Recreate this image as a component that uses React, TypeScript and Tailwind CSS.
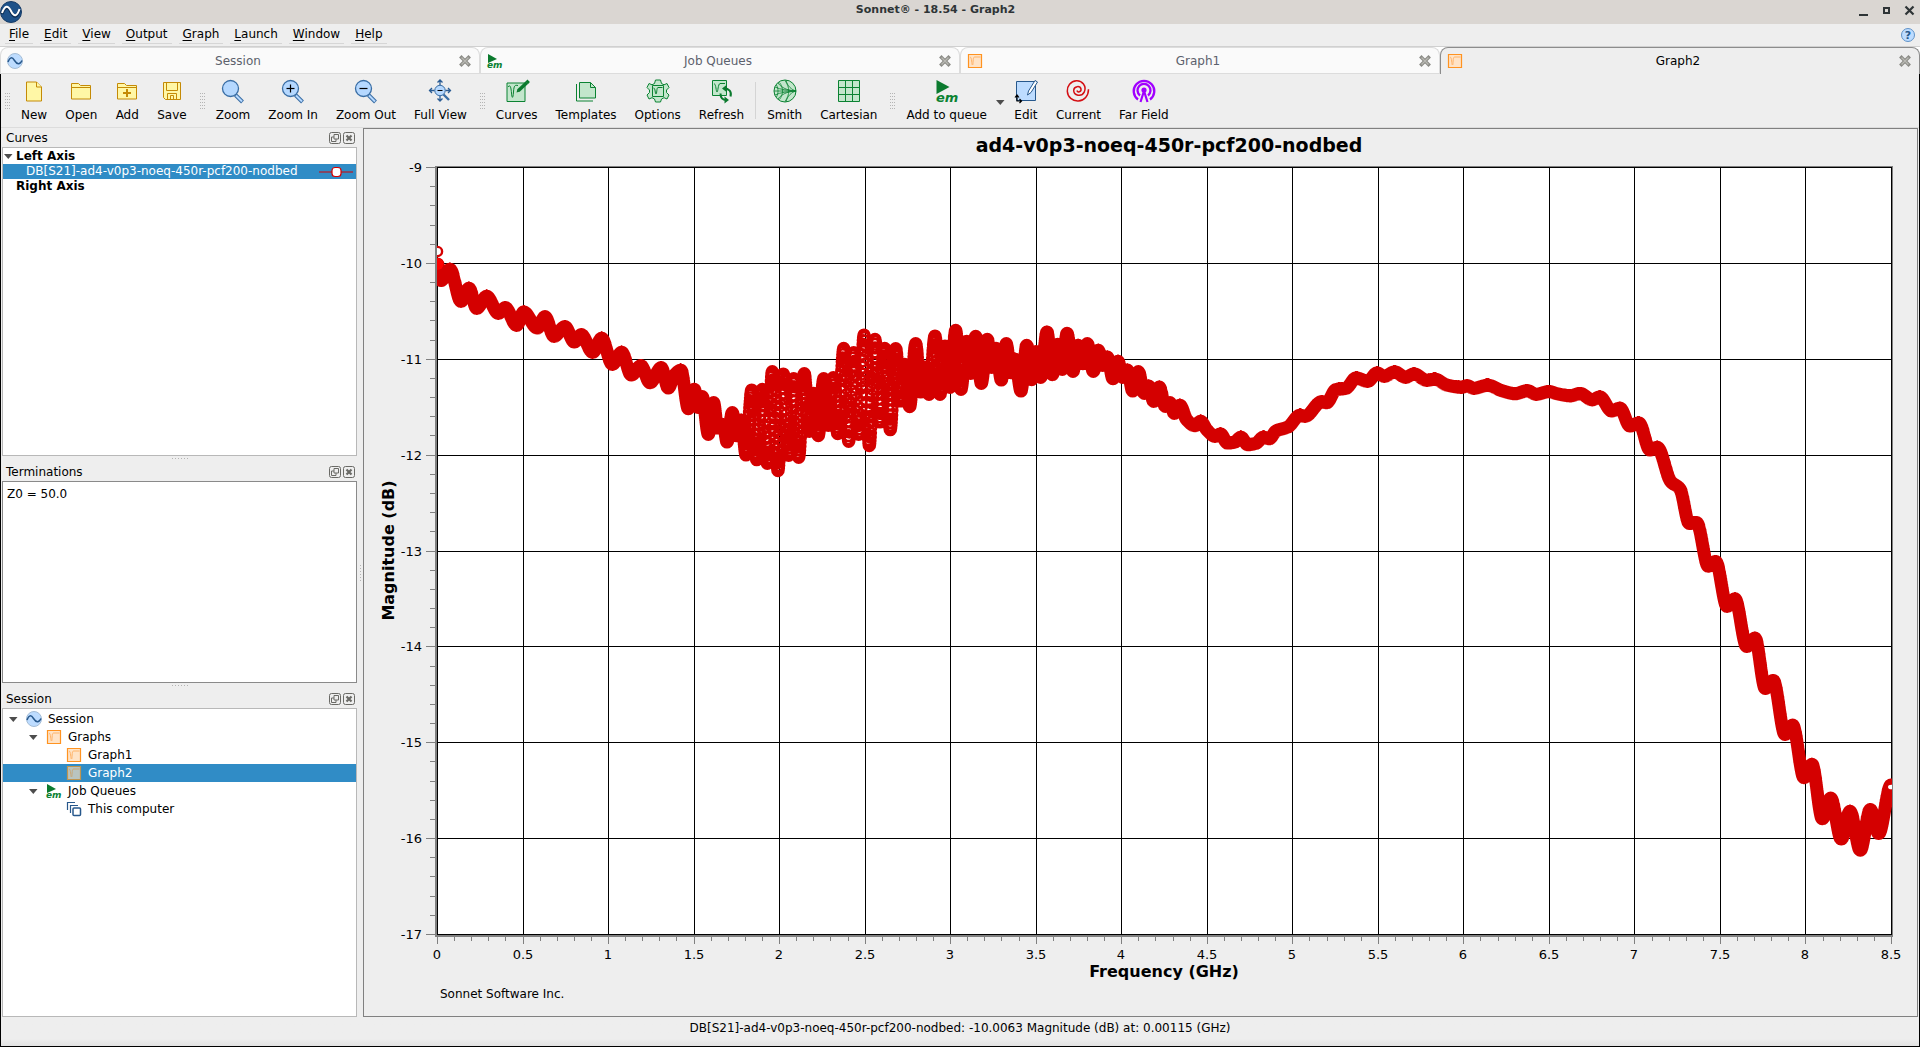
import { useState } from 'react';
import type { ReactNode } from 'react';

/* ---------- Icons ---------- */

const YELLOW = { fill: '#fff7a6', stroke: '#c48a06' };
const GREEN = { fill: '#c3e6cc', stroke: '#0b8232' };
const BLUE = { fill: '#b5d8ff', stroke: '#3a6ea5' };

function Svg({ children, size = 24 }: { children: ReactNode; size?: number }) {
  return (
    <svg width={size} height={size} viewBox={`0 0 ${size} ${size}`} fill="none" className="shrink-0 overflow-visible">
      {children}
    </svg>
  );
}

const NewIcon = () => (
  <Svg>
    <path d="M4.5 3h10l5 5v14h-15z" {...YELLOW} />
    <path d="M14.5 3v5h5" {...YELLOW} />
  </Svg>
);

const OpenIcon = () => (
  <Svg>
    <path d="M2.5 20V4.5h7l2 2h10V20z" {...YELLOW} />
    <path d="M2.5 8.5h19" {...YELLOW} />
  </Svg>
);

const AddIcon = () => (
  <Svg>
    <path d="M2.5 20V4.5h7l2 2h10V20z" {...YELLOW} />
    <path d="M2.5 8.5h19" {...YELLOW} />
    <path d="M12 10v8M8 14h8" stroke="#c48a06" strokeWidth="2" />
  </Svg>
);

const SaveIcon = () => (
  <Svg>
    <path d="M3.5 3.5h17v17h-15l-2-2z" {...YELLOW} />
    <path d="M6.5 3.5v8h11v-8M7.5 20.5v-6h9v6M10.5 20.5v-4h3v4" stroke="#c48a06" />
  </Svg>
);

function Lens({ sign }: { sign?: 'plus' | 'minus' }) {
  return (
    <Svg>
      <path d="M14.5 16l7 7" stroke="#3a6ea5" strokeWidth="4" />
      <path d="M15 16.5l6 6" stroke="#b5d8ff" strokeWidth="2" />
      <circle cx="9.5" cy="9.5" r="8" {...BLUE} strokeWidth="1.3" />
      {sign && <path d="M5.5 9.5h8" stroke="#000" strokeWidth="1.2" />}
      {sign === 'plus' && <path d="M9.5 5.5v8" stroke="#000" strokeWidth="1.2" />}
    </Svg>
  );
}

const FullViewIcon = () => (
  <Svg>
    <path d="M15 15l6 6" stroke="#3a6ea5" strokeWidth="2.4" />
    <circle cx="12" cy="11.5" r="5.2" {...BLUE} />
    <path d="M9.5 11.5h5" stroke="#000" />
    <path
      d="M12 6V1M9.5 3.5L12 1l2.5 2.5M12 17v5M9.5 19.5L12 22l2.5-2.5M6.5 11.5h-5M4 9l-2.5 2.5L4 14M17.5 11.5h5M20 9l2.5 2.5L20 14"
      stroke="#2a5c94"
      strokeWidth="1.3"
    />
  </Svg>
);

const CurvesIcon = () => (
  <Svg>
    <path d="M2 4h18v18.5H2z" {...GREEN} />
    <path d="M3 8c2-3 3 0 3.5 6 .5 6 1.5 6 2-1C9 6 10 6 13 6.5" stroke="#0b8232" />
    <path d="M13.5 11.5L22 3.5" stroke="#0b7a2e" strokeWidth="3.6" />
    <path d="M21.5 1.5l2.5 2.5" stroke="#0b7a2e" strokeWidth="2.5" />
    <path d="M11.5 13.5l1-3.5 2.5 2.5z" fill="#0b7a2e" />
  </Svg>
);

const TemplatesIcon = () => (
  <Svg>
    <path d="M5.5 3.5h11l5 5v10.5h-16z" {...GREEN} />
    <path d="M16.5 3.5v5h5M2.5 5v17h16.5" stroke="#0b8232" />
  </Svg>
);

const OptionsIcon = () => (
  <Svg>
    <path
      d="M9.5 1h5l1 3.5 2.5 1.3 3-1.3 2 4-2.500 2.500v2.500l2.500 2.500-2 4-3-1.300-2.500 1.300-1 3h-5l-1-3L6 18.700 3 20l-2-4 2.500-2.500V11L1 8.500l2-4 3 1.300L8.500 4.500z"
      {...GREEN}
      strokeLinejoin="round"
    />
    <path d="M6.5 6.5h11v11h-11z" {...GREEN} />
    <path d="M7.5 9c2 0 1.5 6 2.5 6s.5-6.5 2-6.5h4.5" stroke="#0b8232" />
  </Svg>
);

const RefreshIcon = () => (
  <Svg>
    <path d="M2.5 1.5h14v15h-14z" {...GREEN} />
    <path d="M4 5c2-1 2 8 3 8s1-8 3-8.5h5" stroke="#0b8232" />
    <path d="M14 9.5c5 0 8 3 6.5 8M10.5 14.5c0 4 2 6.5 6 6.5" stroke="#0b7a2e" strokeWidth="2" />
    <path d="M12 9.5l4.5-3.5v7zM19 21l-4.5-3.5v7z" fill="#0b7a2e" />
  </Svg>
);

const SmithIcon = () => (
  <Svg>
    <circle cx="12" cy="12" r="11" {...GREEN} />
    <path
      d="M1 12h22M23 12C18 12 9 10 5 4M23 12C18 12 9 14 5 20M23 12C19 11 14 7 13 1M23 12c-4 1-9 5-10 11M23 12c-8-1-15-1-21-4M23 12c-8 1-15 1-21 4M6.5 3.5c4 5 4 12 0 17M12 1.5c5 7 5 14 0 21M3.5 6c2 4 2 8 0 12"
      stroke="#0b8232"
      strokeWidth=".8"
    />
  </Svg>
);

const CartesianIcon = () => (
  <Svg>
    <path d="M1.5 1.5h21v21h-21z" {...GREEN} />
    <path d="M8.5 1.5v21M15.5 1.5v21M1.5 8.5h21M1.5 15.5h21" stroke="#0b8232" />
  </Svg>
);

const EmIcon = () => (
  <Svg>
    <path d="M1.5 1l13 7-13 7z" fill="#0b7a2e" />
    <text x="1" y="23" fontFamily="DejaVu Sans" fontSize="13" fontStyle="italic" fontWeight="bold" fill="#0b8232">em</text>
  </Svg>
);

const SmallEmIcon = () => (
  <Svg size={16}>
    <path d="M1 1l9 5-9 4z" fill="#0b7a2e" />
    <text x="0" y="15" fontFamily="DejaVu Sans" fontSize="9" fontStyle="italic" fontWeight="bold" fill="#0b8232">em</text>
  </Svg>
);

const EditIcon = () => (
  <Svg>
    <path d="M2.5 2.5h19v19h-19z" fill="#bddcff" stroke="#27588c" />
    <path d="M13.5 16l1-4L21 1.5l2.5 1.5-6.5 10.5z" fill="#fff" stroke="#27588c" />
    <path d="M3 17v5h4M1 18.5L3 16l2 2.5M5.5 20l2 2-2 2" stroke="#000" strokeWidth="1.2" />
  </Svg>
);

const CurrentIcon = () => (
  <Svg>
    <path
      d="M11 11.5c.5 2.5 4.5 1.5 4-1.5-.8-3.5-7-3.2-7.3 1.300-.2 5.500 8 6.900 10.500 1.900C21 7 16 1.500 10.500 1.800 4.500 2.200 1 7 1.300 12.200c.4 6 5.200 10 11 9.700 6-.4 10.200-5 10.200-11.700"
      stroke="#d40f14"
      strokeWidth="1.5"
    />
  </Svg>
);

const FarFieldIcon = () => (
  <Svg>
    <path d="M6 20.5A10.3 10.3 0 1 1 18 20.5M8 16.5a6.5 6.5 0 1 1 8 0" stroke="#a100ff" strokeWidth="2.3" />
    <circle cx="12" cy="11" r="2.6" fill="#a100ff" />
    <path d="M12 12L8.5 23M12 12l3.5 11" stroke="#a100ff" strokeWidth="2.2" />
  </Svg>
);

const WaveIcon = () => (
  <Svg size={16}>
    <circle cx="8" cy="8" r="7.5" fill="#bddcff" stroke="#a5bdd6" />
    <path d="M1 9C3 4 5 3.5 7.5 7.5S13 12 15 7.5" stroke="#27588c" strokeWidth="1.5" />
  </Svg>
);

function GraphIcon({ muted }: { muted?: boolean }) {
  return (
    <Svg size={16}>
      <path
        d="M1.5 1.5h13v13h-13z"
        fill={muted ? '#b9c4c0' : '#ffe3c6'}
        stroke={muted ? '#c0954e' : '#ff9320'}
        strokeWidth="1.2"
      />
      <path d="M3 4c2 0 1.5 8 2.5 8s0-8 2-8h6" stroke={muted ? '#c9a878' : '#ffb468'} />
    </Svg>
  );
}

const ComputerIcon = () => (
  <Svg size={16}>
    <path d="M1.5 9V1.5H9M4.5 12V4.5H12" stroke="#27588c" strokeWidth="1.2" />
    <rect x="7" y="7" width="7.5" height="7.5" rx="1" fill="#fff" stroke="#27588c" strokeWidth="1.5" />
  </Svg>
);

const AppLogo = () => (
  <Svg size={22}>
    <circle cx="11" cy="11" r="10.5" fill="#1d5189" stroke="#163b66" />
    <path d="M2 13C5 5 8 5 11 11s6 6 8.5-2" stroke="#0c2c52" strokeWidth="3" />
    <path d="M2 12C5 4 8 4 11 10s6 6 8.5-2" stroke="#fff" strokeWidth="2" />
  </Svg>
);

const CloseGlyph = () => (
  <svg width="12" height="12" viewBox="0 0 12 12">
    <path d="M2.5 2.5l7 7M9.5 2.5l-7 7" stroke="#8a8a85" strokeWidth="3.4" strokeLinecap="square" />
    <path d="M2.5 2.5l7 7M9.5 2.5l-7 7" stroke="#b9b9b3" strokeWidth="1.4" />
  </svg>
);

const Arrow = () => (
  <svg width="9" height="5" viewBox="0 0 9 5" className="shrink-0">
    <path d="M0 0h8.5L4.3 5z" fill="#4d4d4d" />
  </svg>
);

// Dotted handle used for toolbars and splitters
function Grip({ cols, rows, stepX = 2 }: { cols: number; rows: number; stepX?: number }) {
  const dots: ReactNode[] = [];
  for (let r = 0; r < rows; r++) {
    for (let c = 0; c < cols; c++) {
      dots.push(<rect key={`${r}-${c}`} x={c * stepX} y={r * 3} width="1" height="1" fill="#b4b4b4" />);
    }
  }
  return (
    <svg width={(cols - 1) * stepX + 1} height={(rows - 1) * 3 + 1} className="shrink-0" shapeRendering="crispEdges">
      {dots}
    </svg>
  );
}

/* ---------- Window chrome ---------- */

const MENUS = ['File', 'Edit', 'View', 'Output', 'Graph', 'Launch', 'Window', 'Help'];

function TitleBar() {
  return (
    <header className="flex h-6 items-center bg-[#dad6d2]">
      <div className="flex flex-1 items-center">
        <AppLogo />
      </div>
      <h1 className="mr-11 pb-1 text-[11px] font-bold text-[#2e3436]">Sonnet® - 18.54 - Graph2</h1>
      <div className="flex flex-1 items-center justify-end gap-3 pb-1 pr-[5px]">
        <button aria-label="Minimize">
          <svg width="11" height="11"><path d="M1 9h9v2H1z" fill="#2e3436" /></svg>
        </button>
        <button aria-label="Maximize">
          <svg width="11" height="11"><path d="M3 3h5v5H3z" fill="none" stroke="#2e3436" strokeWidth="2" /></svg>
        </button>
        <button aria-label="Close">
          <svg width="11" height="11"><path d="M1.5 1.5l8 8M9.5 1.5l-8 8" stroke="#2e3436" strokeWidth="2.2" /></svg>
        </button>
      </div>
    </header>
  );
}

function MenuBar() {
  return (
    <nav className="flex h-[22px] items-start gap-[7px] px-[5px]">
      {MENUS.map((m) => (
        <button key={m} className="h-5 border-b border-[#d6d6d6] px-1 leading-5">
          <span className="underline underline-offset-2">{m[0]}</span>
          {m.slice(1)}
        </button>
      ))}
      <button aria-label="Context help" className="ml-auto pt-1">
        <svg width="14" height="14" viewBox="0 0 14 14">
          <circle cx="7" cy="7" r="6.5" fill="#bddcff" stroke="#5f92c8" />
          <text x="7" y="11" textAnchor="middle" fontSize="11" fontWeight="bold" fill="#27588c">?</text>
        </svg>
      </button>
    </nav>
  );
}

const TABS = [
  { name: 'Session', icon: <WaveIcon /> },
  { name: 'Job Queues', icon: <SmallEmIcon /> },
  { name: 'Graph1', icon: <GraphIcon /> },
  { name: 'Graph2', icon: <GraphIcon /> },
];

function TabBar() {
  const [active, setActive] = useState('Graph2');
  return (
    <div role="tablist" className="flex h-7 border-t border-[#d0d0d0] bg-white">
      {TABS.map((tab) => (
        <div
          key={tab.name}
          className={`flex flex-1 items-center rounded-t-lg border border-b-0 pl-1.5 pr-1 ${
            active === tab.name ? 'border-[#8c8c8c] bg-[#eeeeee] text-black' : 'border-[#dcdcdc] bg-[#fafafa] text-[#5c616c] shadow-[inset_0_-1px_0_#dcdcdc]'
          }`}
        >
          {tab.icon}
          <button role="tab" aria-selected={active === tab.name} onClick={() => setActive(tab.name)} className="flex-1 pr-[2px] text-center">
            {tab.name}
          </button>
          <button aria-label={`Close ${tab.name}`} className="flex w-5 justify-center">
            <CloseGlyph />
          </button>
        </div>
      ))}
    </div>
  );
}

function Tool({ icon, label }: { icon: ReactNode; label: string }) {
  return (
    <button className="flex flex-col items-center gap-1 px-[9px] pt-[5px]">
      {icon}
      <span className="leading-4">{label}</span>
    </button>
  );
}

function ToolGrip() {
  return (
    <div className="flex items-center pl-1 pr-[2px]">
      <Grip cols={3} rows={6} />
    </div>
  );
}

function Toolbar() {
  return (
    <div role="toolbar" className="flex h-[54px] border-b border-[#dcdcdc]">
      <ToolGrip />
      <Tool icon={<NewIcon />} label="New" />
      <Tool icon={<OpenIcon />} label="Open" />
      <Tool icon={<AddIcon />} label="Add" />
      <Tool icon={<SaveIcon />} label="Save" />
      <ToolGrip />
      <Tool icon={<Lens />} label="Zoom" />
      <Tool icon={<Lens sign="plus" />} label="Zoom In" />
      <Tool icon={<Lens sign="minus" />} label="Zoom Out" />
      <Tool icon={<FullViewIcon />} label="Full View" />
      <ToolGrip />
      <Tool icon={<CurvesIcon />} label="Curves" />
      <Tool icon={<TemplatesIcon />} label="Templates" />
      <Tool icon={<OptionsIcon />} label="Options" />
      <Tool icon={<RefreshIcon />} label="Refresh" />
      <div className="mx-[2px] my-2 w-px bg-[#d4d4d4]" />
      <Tool icon={<SmithIcon />} label="Smith" />
      <Tool icon={<CartesianIcon />} label="Cartesian" />
      <ToolGrip />
      <Tool icon={<EmIcon />} label="Add to queue" />
      <button aria-label="Queue options" className="pt-1">
        <Arrow />
      </button>
      <Tool icon={<EditIcon />} label="Edit" />
      <Tool icon={<CurrentIcon />} label="Current" />
      <Tool icon={<FarFieldIcon />} label="Far Field" />
    </div>
  );
}

/* ---------- Left docks ---------- */

function DockTitle({ title }: { title: string }) {
  return (
    <div className="flex h-[19px] shrink-0 items-center gap-[2px] pl-1 pr-[2px]">
      <h2 className="flex-1">{title}</h2>
      <button aria-label={`Float ${title}`}>
        <svg width="12" height="12" viewBox="0 0 12 12" fill="none" stroke="#6a6a66">
          <rect x=".5" y=".5" width="11" height="11" rx="2" />
          <path d="M5 2.5h4.5V7H5zM5 5H2.5v4.5H7V7" />
        </svg>
      </button>
      <button aria-label={`Close ${title}`}>
        <svg width="12" height="12" viewBox="0 0 12 12" fill="none" stroke="#6a6a66">
          <rect x=".5" y=".5" width="11" height="11" rx="2" />
          <path d="M3.5 3.5l5 5M8.5 3.5l-5 5" strokeWidth="2.2" />
        </svg>
      </button>
    </div>
  );
}

const Splitter = () => (
  <div className="flex h-[6px] shrink-0 items-start justify-center pt-[2px]">
    <Grip cols={6} rows={1} stepX={3} />
  </div>
);

function CurvesDock() {
  return (
    <section className="flex min-h-0 flex-[328] flex-col">
      <DockTitle title="Curves" />
      <ul className="min-h-0 flex-1 border border-[#b8b8b8] bg-white pt-px leading-[15px]">
        <li>
          <button className="flex items-center gap-[3px] pl-px font-bold">
            <Arrow />
            Left Axis
          </button>
        </li>
        <li className="flex items-center justify-between bg-[#308cc6] pl-[23px] pr-[3px] text-white">
          <button className="whitespace-nowrap">DB[S21]-ad4-v0p3-noeq-450r-pcf200-nodbed</button>
          <svg width="34" height="14" viewBox="0 0 34 14" className="shrink-0">
            <path d="M0 7h34" stroke="#d40000" strokeWidth="1.2" />
            <rect x="13" y="2.5" width="9" height="9" rx="3" fill="#fff" stroke="#d40000" strokeWidth="1.2" />
          </svg>
        </li>
        <li>
          <button className="pl-[13px] font-bold">Right Axis</button>
        </li>
      </ul>
    </section>
  );
}

function TerminationsDock() {
  return (
    <section className="flex min-h-0 flex-[221] flex-col">
      <DockTitle title="Terminations" />
      <textarea
        aria-label="Terminations"
        readOnly
        defaultValue="Z0 = 50.0"
        className="min-h-0 flex-1 resize-none border border-[#8a8a8a] bg-white p-1 leading-4 outline-none"
      />
    </section>
  );
}

function SessionDock() {
  return (
    <section className="flex min-h-0 flex-[328] flex-col">
      <DockTitle title="Session" />
      <ul className="min-h-0 flex-1 border border-[#b8b8b8] bg-white pt-px leading-[18px]">
        <li>
          <button className="flex items-center pl-[6px]">
            <Arrow />
            <span className="ml-2 mr-[6px]"><WaveIcon /></span>
            Session
          </button>
        </li>
        <li>
          <button className="flex items-center pl-[26px]">
            <Arrow />
            <span className="ml-2 mr-[6px]"><GraphIcon /></span>
            Graphs
          </button>
        </li>
        <li>
          <button className="flex items-center gap-[6px] pl-[63px]">
            <GraphIcon />
            Graph1
          </button>
        </li>
        <li className="bg-[#308cc6] text-white">
          <button className="flex items-center gap-[6px] pl-[63px]">
            <GraphIcon muted />
            Graph2
          </button>
        </li>
        <li>
          <button className="flex items-center pl-[26px]">
            <Arrow />
            <span className="ml-2 mr-[6px]"><SmallEmIcon /></span>
            Job Queues
          </button>
        </li>
        <li>
          <button className="flex items-center gap-[6px] pl-[63px]">
            <ComputerIcon />
            This computer
          </button>
        </li>
      </ul>
    </section>
  );
}

/* ---------- Plot ---------- */

// Plot area inside the 1553 x 887 canvas
const LEFT = 73;
const TOP = 38;
const RIGHT = 1527;
const BOTTOM = 805;

const gridX = (i: number) => LEFT + Math.round((i * (RIGHT - LEFT)) / 17);
const gridY = (i: number) => TOP + Math.round((i * (BOTTOM - TOP)) / 8);

// Turning points of the S21 trace, canvas units
const TRACE: [number, number][] = [
  [73.5, 135], [77, 151.5], [86, 140.3], [97, 172.3], [105, 159.3], [112.7, 179.3], [122.7, 167.3], [134.3, 184.3],
  [141.3, 178.7], [152.7, 196.3], [159.7, 183], [173.3, 199], [181, 187.7], [190, 207.3], [201, 197.7], [210.3, 213],
  [217.3, 205.7], [228.7, 223.3], [237.7, 209.3], [248.3, 235.3], [257.7, 223.3], [267.3, 246], [277, 236.7],
  [286, 253.7], [297.3, 238.7], [304.3, 259], [310, 246.5], [317, 241.3], [324.3, 279.7], [330.3, 260.3], [334, 278.3],
  [338.3, 267.7], [344.3, 305.3], [349.7, 273.7], [353.7, 299], [359.3, 296], [363, 313], [368.3, 283.7],
  [372.7, 306.7], [377.3, 291], [382, 326], [387.7, 261], [392.7, 330.7], [398.3, 260.3], [403.3, 334.3],
  [408.3, 242.7], [414, 341.7], [419.3, 245], [424.7, 326.3], [429.7, 249.7], [434.7, 328.3], [440.3, 244.7],
  [445.3, 302.3], [449.7, 264.3], [454.3, 306.7], [459.7, 249.7], [464.3, 296.3], [469.3, 248.7], [473.7, 304.7],
  [479.7, 219.3], [484.7, 312.3], [489.7, 223.7], [494.7, 305.3], [500, 206], [505.3, 316.7], [511, 210.3],
  [516, 293], [520.7, 219.3], [526.3, 300.7], [531.7, 219.7], [536.7, 272], [540.7, 235.3], [545.7, 277.7],
  [551.7, 214.7], [556.7, 263], [560.7, 238], [565, 265.3], [571, 207], [576, 265.3], [581, 217], [586, 258.3],
  [591.7, 201.3], [597, 260.3], [602.7, 212.3], [606.7, 244.3], [611.7, 207.3], [617.3, 254.3], [623.3, 210.3],
  [627.7, 238.3], [632, 219.3], [637.3, 251], [642.3, 214.7], [646.7, 243.7], [651, 230.3], [657, 262],
  [662.7, 216.3], [667.7, 250.7], [672, 222.7], [676.7, 248.3], [683, 203], [688.3, 245.7], [693.7, 215.3],
  [698.3, 240.3], [703, 204.3], [709, 242.3], [714, 216.3], [719, 234.7], [723.3, 214.7], [729.3, 242.3],
  [734.3, 221.3], [738.7, 236.3], [743.3, 228], [749, 249.7], [754, 232.3], [758.7, 248.3], [763.3, 241],
  [768.7, 262], [774.3, 242.7], [780.3, 264.3], [784.7, 257], [789.7, 272.3], [795.3, 258], [801.3, 277.3],
  [806, 273.7], [810.3, 284.3], [816, 276.3], [822.7, 290.7], [831, 296.7], [836.7, 292.3], [843, 301],
  [851, 307.3], [856.7, 305], [863.3, 314], [870.3, 313.3], [877, 308.3], [883.7, 315.7], [892, 314.3],
  [899.3, 308.3], [905.3, 309.7], [912, 302], [924, 298], [936, 286.3], [941, 287.3], [957.7, 272.7],
  [962.7, 273.7], [971.7, 260.7], [982, 259.3], [992, 249], [1003.7, 252.3], [1013, 244], [1020.3, 247.3],
  [1030.7, 243], [1041.7, 248.3], [1050, 245], [1062.7, 251.3], [1071, 250.3], [1082.7, 256], [1097.7, 258.3],
  [1103, 256.7], [1109.7, 259.3], [1123.7, 256.3], [1137.7, 261.7], [1151.3, 264.7], [1163.3, 261.7],
  [1172, 265.3], [1185.3, 262.6], [1192, 264.5], [1206.7, 266.8], [1216, 264.5], [1228.3, 270.8], [1236, 268],
  [1247.7, 282], [1256, 279.2], [1266, 297], [1275, 294], [1286, 321], [1293.3, 318.4], [1306.7, 352.4],
  [1316, 360], [1325.3, 394.4], [1332.7, 393.7], [1344.3, 437.2], [1351.7, 432.5], [1363, 477.3], [1371, 469.9],
  [1382.7, 517.4], [1391, 509.2], [1401.3, 559.4], [1409.3, 551.5], [1421, 605.4], [1428.7, 596.2],
  [1440, 648.6], [1448, 635.4], [1458.3, 689.7], [1466.7, 669.2], [1477.3, 710], [1486, 682.3], [1496.3, 721.2],
  [1506.3, 680.5], [1514.7, 704.5], [1527, 656],
];

const STEP = 0.25;
const R = 5.4;

// Monotone cubic through the turning points, with one ring marker per sample
function markerPath() {
  const n = TRACE.length;
  const slope = (i: number) => (TRACE[i + 1][1] - TRACE[i][1]) / (TRACE[i + 1][0] - TRACE[i][0]);
  const tangent = (i: number) => {
    if (i === 0 || i === n - 1) return 0;
    const a = slope(i - 1);
    const b = slope(i);
    return a * b <= 0 ? 0 : (2 * a * b) / (a + b);
  };

  let d = '';
  for (let i = 0; i < n - 1; i++) {
    const [x0, y0] = TRACE[i];
    const [x1, y1] = TRACE[i + 1];
    const h = x1 - x0;
    const m0 = tangent(i) * h;
    const m1 = tangent(i + 1) * h;
    const count = Math.round(h / STEP);
    for (let k = 0; k < count; k++) {
      const t = k / count;
      const t2 = t * t;
      const t3 = t2 * t;
      const y = (2 * t3 - 3 * t2 + 1) * y0 + (t3 - 2 * t2 + t) * m0 + (3 * t2 - 2 * t3) * y1 + (t3 - t2) * m1;
      d += `M${(x0 + h * t - R).toFixed(2)} ${y.toFixed(2)}a${R} ${R} 0 1 0 ${2 * R} 0a${R} ${R} 0 1 0 ${-2 * R} 0`;
    }
  }
  return d;
}

const MARKERS = markerPath();

function Plot() {
  const xs = Array.from({ length: 18 }, (_, i) => i);
  const ys = Array.from({ length: 9 }, (_, i) => i);
  const minorX = Array.from({ length: 86 }, (_, i) => LEFT + Math.round((i * (RIGHT - LEFT)) / 85));
  const minorY = Array.from({ length: 41 }, (_, i) => TOP + Math.round((i * (BOTTOM - TOP)) / 40));
  const midX = (LEFT + RIGHT) / 2;
  const midY = (TOP + BOTTOM) / 2;

  return (
    <svg viewBox="0 0 1553 887" className="block h-full w-full" fontSize="13" role="img" aria-label="S21 magnitude over frequency">
      <defs>
        <clipPath id="area">
          <rect x={LEFT} y={TOP} width={RIGHT - LEFT + 1} height={BOTTOM - TOP} />
        </clipPath>
      </defs>

      <text x="805" y="23" textAnchor="middle" fontSize="19" fontWeight="bold">ad4-v0p3-noeq-450r-pcf200-nodbed</text>

      <g shapeRendering="crispEdges">
        <rect x={LEFT - 2} y={TOP - 1} width={RIGHT - LEFT + 4} height={BOTTOM - TOP + 4} fill="#808080" />
        <rect x={LEFT} y={TOP} width={RIGHT - LEFT + 1} height={BOTTOM - TOP + 1} fill="#fff" />
        {xs.map((i) => <rect key={i} x={gridX(i)} y={TOP} width="1" height={BOTTOM - TOP + 1} />)}
        {ys.map((i) => <rect key={i} x={LEFT} y={gridY(i)} width={RIGHT - LEFT + 1} height="1" />)}
        {minorX.map((x, i) => (
          <rect key={x} x={x} y={BOTTOM + 2} width="1" height={i % 5 === 0 ? 8 : 5} fill="#808080" />
        ))}
        {minorY.map((y, i) => (
          <rect key={y} x={i % 5 === 0 ? LEFT - 11 : LEFT - 7} y={y} width={i % 5 === 0 ? 10 : 6} height="1" fill="#808080" />
        ))}
      </g>

      {xs.map((i) => <text key={i} x={gridX(i)} y="830" textAnchor="middle">{i / 2}</text>)}
      {ys.map((i) => <text key={i} x="58" y={gridY(i) + 5} textAnchor="end">{-9 - i}</text>)}

      <g clipPath="url(#area)" fill="none">
        <path d={MARKERS} stroke="#d40000" strokeWidth="2.4" />
        <circle cx="73.5" cy="122.5" r="4.6" fill="#fff" stroke="#d40000" strokeWidth="2.4" />
        <circle cx="73.5" cy="135" r="6" fill="#f00" />
        <ellipse cx="1527.5" cy="658" rx="3.5" ry="2.3" fill="#fff" />
      </g>

      <text x={midX} y="848" textAnchor="middle" fontSize="16" fontWeight="bold">Frequency (GHz)</text>
      <text x="30" y={midY} textAnchor="middle" fontSize="16" fontWeight="bold" transform={`rotate(-90 30 ${midY})`}>Magnitude (dB)</text>
      <text x="76" y="869" fontSize="12">Sonnet Software Inc.</text>
    </svg>
  );
}

export default function App() {
  return (
    <div className="flex h-screen flex-col bg-[#eeeeee] font-['DejaVu_Sans',sans-serif] text-xs text-black">
      <TitleBar />
      <MenuBar />
      <TabBar />
      <div className="flex min-h-0 flex-1 flex-col border-x border-b border-black">
        <Toolbar />
        <div className="flex min-h-0 flex-1 pl-px pr-px">
          <aside className="flex w-[355px] shrink-0 flex-col">
            <CurvesDock />
            <Splitter />
            <TerminationsDock />
            <Splitter />
            <SessionDock />
          </aside>
          <div className="flex w-[6px] shrink-0 items-center justify-center">
            <Grip cols={1} rows={6} />
          </div>
          <main className="min-w-0 flex-1 border border-[#808080]">
            <Plot />
          </main>
        </div>
        <footer className="flex h-[29px] shrink-0 justify-center bg-linear-to-b from-[#eeeeee] from-75% to-[#e2e2e2] pt-[3px] leading-4">
          DB[S21]-ad4-v0p3-noeq-450r-pcf200-nodbed: -10.0063 Magnitude (dB) at: 0.00115 (GHz)
        </footer>
      </div>
    </div>
  );
}
